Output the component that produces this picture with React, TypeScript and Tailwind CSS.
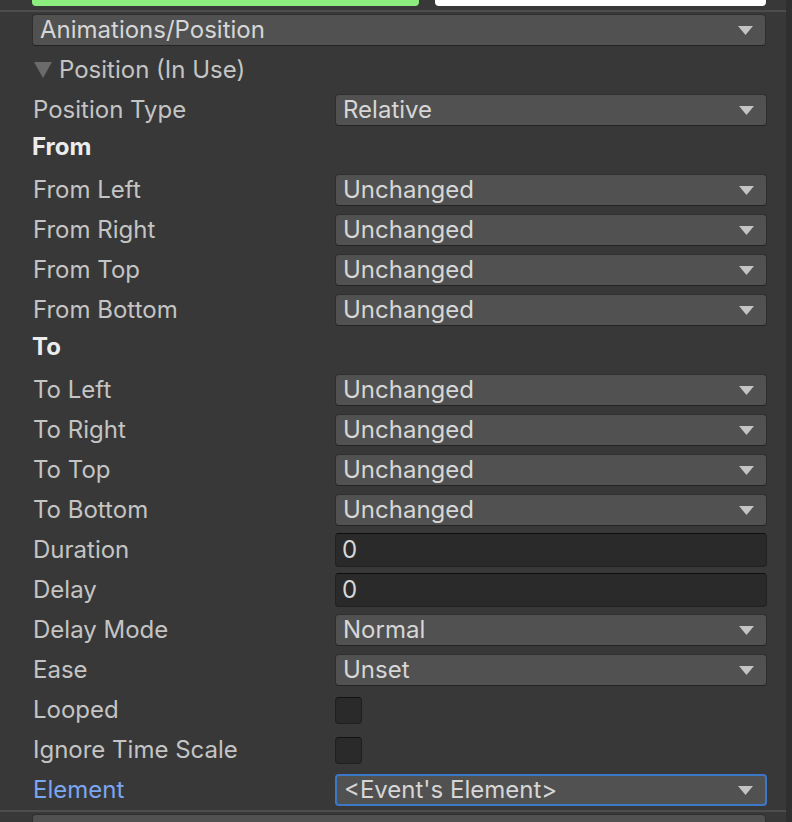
import React from 'react';

const font = { fontFamily: 'Inter, "Noto Sans", sans-serif' };

function Arrow() {
  return (
    <svg width="15" height="9" viewBox="0 0 15 9" className="shrink-0">
      <path d="M0 0 H15 L7.5 9 Z" fill="#c4c4c4" />
    </svg>
  );
}

function Dropdown({ value, focused }: { value: string; focused?: boolean }) {
  return (
    <div
      className={
        'flex h-[32px] flex-1 items-center justify-between rounded-[4px] bg-[#515151] pl-[7px] pr-[12px] ' +
        (focused ? 'border-2 border-[#3c78c8]' : 'border border-[#2e2e2e] border-b-[#232323]')
      }
    >
      <span className="text-[24px] text-[#d6d6d6] leading-none">{value}</span>
      <Arrow />
    </div>
  );
}

function TextField({ value }: { value: string }) {
  return (
    <div className="flex h-[34px] flex-1 items-center rounded-[4px] border border-[#212121] border-t-[#0e0e0e] bg-[#2a2a2a] pl-[6px]">
      <span className="text-[24px] text-[#d6d6d6] leading-none">{value}</span>
    </div>
  );
}

function Checkbox() {
  return <div className="h-[27px] w-[27px] rounded-[4px] border border-[#1f1f1f] border-t-[#121212] bg-[#2a2a2a]" />;
}

function Row({ label, children, blue }: { label: string; children: React.ReactNode; blue?: boolean }) {
  return (
    <div className="flex h-[40px] shrink-0 items-center">
      <div
        className={'w-[303px] shrink-0 pl-[1px] text-[24px] leading-none ' + (blue ? 'text-[#7ba7f0]' : 'text-[#c4c4c4]')}
      >
        {label}
      </div>
      <div className="flex flex-1 items-center">{children}</div>
    </div>
  );
}

function Header({ label }: { label: string }) {
  return (
    <div className="flex h-[40px] shrink-0 items-center pb-[6px]">
      <span className="text-[24px] font-bold leading-none text-[#ececec]">{label}</span>
    </div>
  );
}

export default function App() {
  const fromRows = ['From Left', 'From Right', 'From Top', 'From Bottom'];
  const toRows = ['To Left', 'To Right', 'To Top', 'To Bottom'];

  return (
    <div className="flex h-[822px] w-[792px] overflow-hidden bg-[#383838]" style={font}>
      <div className="w-[786px]">
        {/* cut-off fields from the section above */}
        <div className="flex h-[10px] items-start pl-[32px]">
          <div className="h-[6px] w-[387px] rounded-b-[4px] bg-[#8ced7f]" />
          <div className="ml-[16px] h-[6px] w-[331px] rounded-b-[4px] bg-white" />
        </div>
        <div className="h-[2px] bg-[#4d4d4d]" />

        <div className="flex flex-col pl-[32px] pr-[19px]">
          <div className="mt-[2px] flex shrink-0 pr-[1px]">
            <Dropdown value="Animations/Position" />
          </div>

          <div className="mt-[4px] flex h-[40px] shrink-0 items-center gap-[7px] pl-[2px]">
            <svg width="18" height="16" viewBox="0 0 18 16">
              <path d="M0 0 H18 L9 16 Z" fill="#6b6b6b" />
            </svg>
            <span className="text-[24px] leading-none text-[#c4c4c4]">Position (In Use)</span>
          </div>

          <Row label="Position Type">
            <Dropdown value="Relative" />
          </Row>

          <Header label="From" />
          {fromRows.map((r) => (
            <Row key={r} label={r}>
              <Dropdown value="Unchanged" />
            </Row>
          ))}

          <Header label="To" />
          {toRows.map((r) => (
            <Row key={r} label={r}>
              <Dropdown value="Unchanged" />
            </Row>
          ))}

          <Row label="Duration">
            <TextField value="0" />
          </Row>
          <Row label="Delay">
            <TextField value="0" />
          </Row>
          <Row label="Delay Mode">
            <Dropdown value="Normal" />
          </Row>
          <Row label="Ease">
            <Dropdown value="Unset" />
          </Row>
          <Row label="Looped">
            <Checkbox />
          </Row>
          <Row label="Ignore Time Scale">
            <Checkbox />
          </Row>
          <Row label="Element" blue>
            <Dropdown value="<Event's Element>" focused />
          </Row>
        </div>

        <div className="h-[2px] bg-[#4d4d4d]" />
        <div className="mt-[2px] pl-[32px] pr-[20px]">
          <div className="h-[20px] rounded-t-[4px] border border-[#2e2e2e] bg-[#515151]" />
        </div>
      </div>
      <div className="w-[6px] bg-[#2f2f2f]" />
    </div>
  );
}
